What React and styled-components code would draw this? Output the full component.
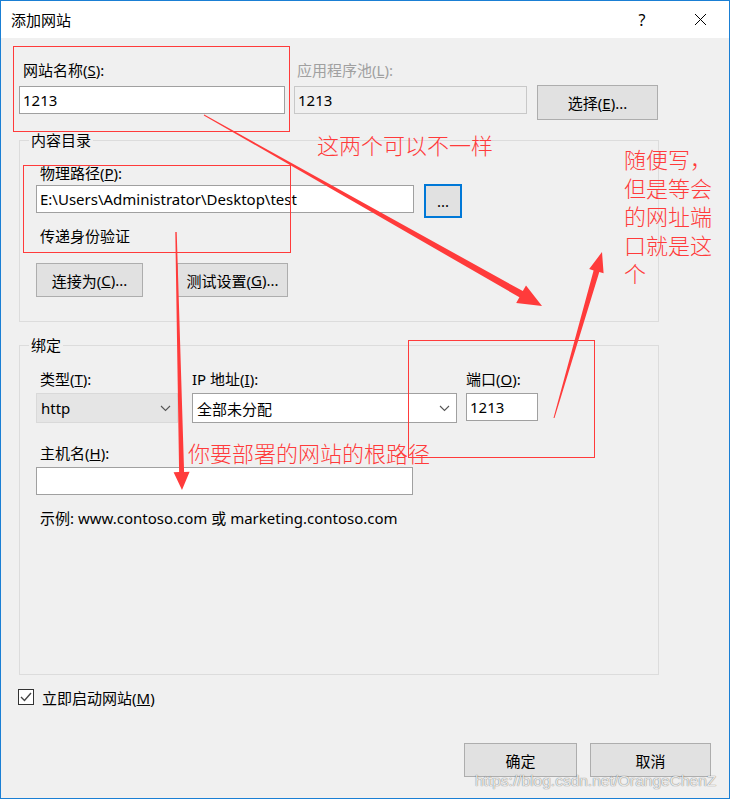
import styled, { createGlobalStyle } from "styled-components";

const GlobalStyle = createGlobalStyle`
  body {
    margin: 0;
    background: #ffffff;
  }
  * {
    box-sizing: border-box;
  }
`;

const UI_FONT = `"Noto Sans", "Noto Sans CJK SC", sans-serif`;
const RED = "#ff3b3b";

const Window = styled.div`
  position: relative;
  width: 730px;
  height: 799px;
  border: 1px solid #1a7fd4;
  background: #f0f0f0;
  display: flex;
  flex-direction: column;
  font-family: ${UI_FONT};
  font-size: 15px;
  color: #000;
  overflow: hidden;
`;
const TitleBar = styled.div`
  height: 37px;
  background: #fff;
  display: flex;
  align-items: center;
  padding-left: 10px;
  font-size: 15px;
  flex-shrink: 0;
`;
const TitleButtons = styled.div`
  margin-left: auto;
  display: flex;
  align-items: center;
`;
const TitleBtn = styled.div`
  width: 58px;
  height: 37px;
  display: flex;
  align-items: center;
  justify-content: center;
  font-size: 16px;
`;
const Body = styled.div`
  padding: 22px 0 0 18px;
  display: flex;
  flex-direction: column;
`;
const TopRow = styled.div`
  display: flex;
  align-items: flex-start;
`;
const Field = styled.div`
  display: flex;
  flex-direction: column;
  width: ${(p) => p.$w}px;
  margin-left: ${(p) => p.$ml || 0}px;
`;
const Label = styled.div`
  height: 20px;
  line-height: 20px;
  margin-left: ${(p) => (p.$indent === undefined ? 4 : p.$indent)}px;
  margin-bottom: ${(p) => p.$mb || 0}px;
  margin-top: ${(p) => p.$mt || 0}px;
  color: ${(p) => (p.$disabled ? "#a0a0a0" : "#000")};
  white-space: nowrap;
`;
const TextBox = styled.div`
  width: ${(p) => (p.$w ? `${p.$w}px` : "100%")};
  height: ${(p) => p.$h || 28}px;
  border: 1px solid ${(p) => (p.$disabled ? "#c8c8c8" : "#a0a0a0")};
  background: ${(p) => (p.$disabled ? "#f0f0f0" : "#fff")};
  display: flex;
  align-items: center;
  padding-left: 3px;
  margin-top: ${(p) => p.$mt || 0}px;
  white-space: nowrap;
  overflow: hidden;
`;
const Button = styled.div`
  width: ${(p) => p.$w}px;
  height: ${(p) => p.$h || 34}px;
  margin-top: ${(p) => p.$mt || 0}px;
  background: #e1e1e1;
  border: ${(p) => (p.$focus ? "2px solid #0078d7" : "1px solid #adadad")};
  display: flex;
  align-items: center;
  justify-content: center;
  flex-shrink: 0;
  white-space: nowrap;
`;
const Group = styled.fieldset`
  width: 640px;
  margin: ${(p) => p.$mt}px 0 0 0;
  padding: 0;
  border: 1px solid #dcdcdc;
  min-width: 0;
`;
const Legend = styled.legend`
  margin-left: 9px;
  padding: 0 2px;
  height: 20px;
  line-height: 20px;
`;
const GroupBody = styled.div`
  padding: ${(p) => p.$pt}px 0 ${(p) => p.$pb}px 16px;
  display: flex;
  flex-direction: column;
`;
const Row = styled.div`
  display: flex;
  align-items: flex-start;
  gap: ${(p) => p.$gap || 0}px;
  margin-top: ${(p) => p.$mt || 0}px;
`;
const Plain = styled.div`
  height: 20px;
  line-height: 20px;
  margin: ${(p) => p.$mt || 0}px 0 0 4px;
  white-space: nowrap;
`;
const Combo = styled.div`
  width: 100%;
  height: 30px;
  border: 1px solid ${(p) => (p.$flat ? "#d9d9d9" : "#a0a0a0")};
  background: ${(p) => (p.$flat ? "#e5e5e5" : "#fff")};
  display: flex;
  align-items: center;
  padding: 0 6px 0 4px;
  justify-content: space-between;
`;
const CheckRow = styled.div`
  display: flex;
  align-items: center;
  gap: 8px;
  margin: 12px 0 0 -1px;
  height: 20px;
`;
const CheckBox = styled.div`
  width: 16px;
  height: 16px;
  border: 1px solid #333;
  background: #fff;
  display: flex;
  align-items: center;
  justify-content: center;
`;
const Footer = styled.div`
  display: flex;
  justify-content: flex-end;
  gap: 13px;
  margin: 36px 18px 0 0;
`;

/* annotation layer */
const Overlay = styled.div`
  position: absolute;
  left: -1px;
  top: -1px;
  width: 731px;
  height: 800px;
  pointer-events: none;
`;
const RedBox = styled.div`
  position: absolute;
  border: 1px solid ${RED};
`;
const Note = styled.div`
  position: absolute;
  color: ${RED};
  font-family: "Noto Sans CJK SC", sans-serif;
  font-weight: 300;
  font-size: 22px;
  line-height: 28.5px;
  white-space: ${(p) => (p.$wrap ? "normal" : "nowrap")};
  word-break: break-all;
`;
const Watermark = styled.div`
  position: absolute;
  left: 475px;
  top: 772px;
  font-family: "Liberation Sans", Arial, sans-serif;
  font-size: 15.5px;
  color: rgba(255, 255, 255, 0.85);
  text-shadow: 0 0 1px rgba(0, 0, 0, 0.45), 0 0 1px rgba(0, 0, 0, 0.3);
  white-space: nowrap;
`;

function arrow(x0, y0, x1, y1, w0, w1, hl, hw) {
  const dx = x1 - x0;
  const dy = y1 - y0;
  const len = Math.hypot(dx, dy);
  const ux = dx / len;
  const uy = dy / len;
  const nx = -uy;
  const ny = ux;
  const bx = x1 - ux * hl;
  const by = y1 - uy * hl;
  const pts = [
    [x0 + (nx * w0) / 2, y0 + (ny * w0) / 2],
    [bx + (nx * w1) / 2, by + (ny * w1) / 2],
    [bx + (nx * hw) / 2, by + (ny * hw) / 2],
    [x1, y1],
    [bx - (nx * hw) / 2, by - (ny * hw) / 2],
    [bx - (nx * w1) / 2, by - (ny * w1) / 2],
    [x0 - (nx * w0) / 2, y0 - (ny * w0) / 2],
  ];
  return pts.map((p) => p.map((v) => v.toFixed(1)).join(",")).join(" ");
}

const Chevron = () => (
  <svg width="11" height="7" viewBox="0 0 11 7">
    <polyline points="1,1 5.5,5.5 10,1" fill="none" stroke="#555" strokeWidth="1.1" />
  </svg>
);

function App() {
  return (
    <>
      <GlobalStyle />
      <Window>
        <TitleBar>
          添加网站
          <TitleButtons>
            <TitleBtn>?</TitleBtn>
            <TitleBtn>
              <svg width="13" height="13" viewBox="0 0 13 13">
                <path d="M1 1 L12 12 M12 1 L1 12" stroke="#000" strokeWidth="1" />
              </svg>
            </TitleBtn>
          </TitleButtons>
        </TitleBar>
        <Body>
          <TopRow>
            <Field $w={266}>
              <Label $mb={6}>
                网站名称(<u>S</u>):
              </Label>
              <TextBox>1213</TextBox>
            </Field>
            <Field $w={233} $ml={9}>
              <Label $mb={6} $indent={3} $disabled>
                应用程序池(<u>L</u>):
              </Label>
              <TextBox $disabled>1213</TextBox>
            </Field>
            <Button $w={121} $h={35} $mt={25} style={{ marginLeft: 10 }}>
              选择(<u>E</u>)...
            </Button>
          </TopRow>

          <Group $mt={10}>
            <Legend>内容目录</Legend>
            <GroupBody $pt={13} $pb={24}>
              <Label $mb={1}>
                物理路径(<u>P</u>):
              </Label>
              <Row $gap={10}>
                <TextBox $w={378} $mt={1}>
                  E:\Users\Administrator\Desktop\test
                </TextBox>
                <Button $w={38} $h={34} $focus>
                  ...
                </Button>
              </Row>
              <Plain $mt={8}>传递身份验证</Plain>
              <Row $gap={34} $mt={17}>
                <Button $w={107}>
                  连接为(<u>C</u>)...
                </Button>
                <Button $w={111}>
                  测试设置(<u>G</u>)...
                </Button>
              </Row>
            </GroupBody>
          </Group>

          <Group $mt={13}>
            <Legend>绑定</Legend>
            <GroupBody $pt={14} $pb={146}>
              <Row>
                <Field $w={142}>
                  <Label $mb={4}>
                    类型(<u>T</u>):
                  </Label>
                  <Combo $flat>
                    http
                    <Chevron />
                  </Combo>
                </Field>
                <Field $w={265} $ml={14}>
                  <Label $mb={4} $indent={0}>
                    IP 地址(<u>I</u>):
                  </Label>
                  <Combo>
                    全部未分配
                    <Chevron />
                  </Combo>
                </Field>
                <Field $w={72} $ml={9}>
                  <Label $mb={4} $indent={0}>
                    端口(<u>O</u>):
                  </Label>
                  <TextBox>1213</TextBox>
                </Field>
              </Row>
              <Label $mt={20} $mb={4}>
                主机名(<u>H</u>):
              </Label>
              <TextBox $w={377} />
              <Plain $mt={13}>示例: www.contoso.com 或 marketing.contoso.com</Plain>
            </GroupBody>
          </Group>

          <CheckRow>
            <CheckBox>
              <svg width="12" height="10" viewBox="0 0 12 10">
                <polyline points="1,5 4.5,8.5 11,1" fill="none" stroke="#444" strokeWidth="1.4" />
              </svg>
            </CheckBox>
            <span>
              立即启动网站(<u>M</u>)
            </span>
          </CheckRow>

          <Footer>
            <Button $w={113}>确定</Button>
            <Button $w={121}>取消</Button>
          </Footer>
        </Body>

        <Overlay>
          <RedBox style={{ left: 13, top: 46, width: 277, height: 86 }} />
          <RedBox style={{ left: 23, top: 165, width: 268, height: 88 }} />
          <RedBox style={{ left: 408, top: 340, width: 187, height: 118 }} />
          <svg width="731" height="800" style={{ position: "absolute", left: 0, top: 0 }}>
            <g fill={RED}>
              <polygon points={arrow(204, 115, 542, 306, 1, 7, 24, 20)} />
              <polygon points={arrow(176, 232, 182, 490, 1.5, 5, 18, 16)} />
              <polygon points={arrow(554, 418, 602, 252, 1, 6, 20, 15)} />
            </g>
          </svg>
          <Note style={{ left: 317, top: 130 }}>这两个可以不一样</Note>
          <Note $wrap style={{ left: 624, top: 144, width: 94 }}>
            随便写，但是等会的网址端口就是这个
          </Note>
          <Note style={{ left: 188, top: 438 }}>你要部署的网站的根路径</Note>
          <Watermark>https://blog.csdn.net/OrangeChenZ</Watermark>
        </Overlay>
      </Window>
    </>
  );
}

export default App;
